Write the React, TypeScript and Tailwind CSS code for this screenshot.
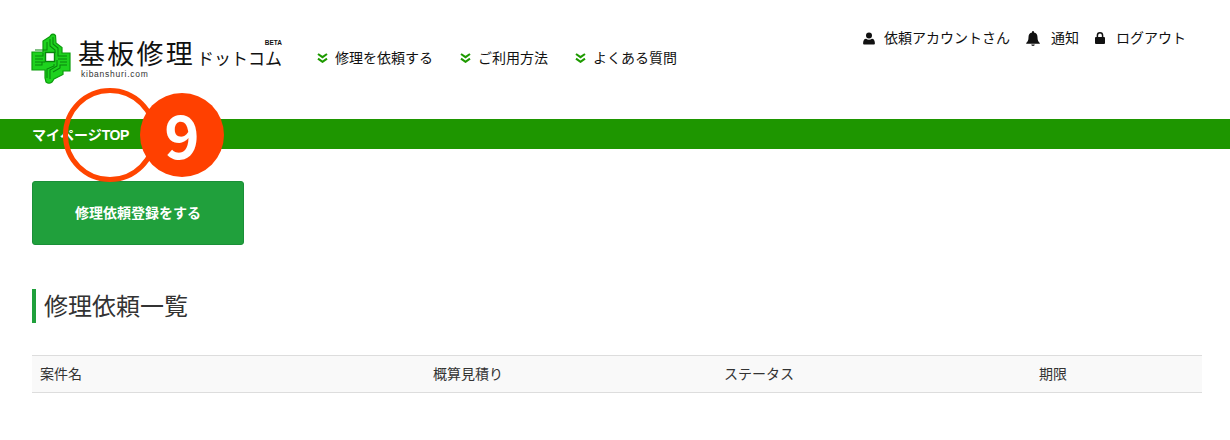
import React from "react";

const jp = { fontFamily: '"Liberation Sans", "Noto Sans CJK JP", sans-serif' };

function Chevrons() {
  return (
    <svg width="11" height="10" viewBox="0 0 11 10" className="shrink-0">
      <path d="M1 1l4.5 3.2L10 1M1 5.6l4.5 3.2L10 5.6" fill="none" stroke="#1e9a00" strokeWidth="2.1" />
    </svg>
  );
}

function Logo() {
  return (
    <svg width="40" height="52" viewBox="1 0 40 52" className="shrink-0">
      <path
        d="M20.500 3.500q2.500-2.500 5 0l.5 7.500 6 4.500 0 5.500 8 0 0 18-7 0 0 3.500-9 4.500-2 3q-3 2.500-6 0l-1-4 0-8-13 0 0-18 11 0 0-11 7-4.500z"
        fill="#1ed21e"
        stroke="#0c9c0c"
        strokeWidth="1.200"
      />
      <path
        d="M23 5v7l5 4v8h9M20 7v7l5 4v3h0M17 10v8h-12M14 18H5M5 24h8v-3M5 27h8M5 30h10M5 33h7v-3M37 27h-9M37 30h-7M37 33h-7v3l-7 4M27 28v6l-7 4v9M24 32v2l-7 3v9"
        fill="none"
        stroke="#08840c"
        strokeWidth="1.050"
      />
      <rect x="15.500" y="20.500" width="9" height="9" fill="#fff" stroke="#08840c" strokeWidth="1.400" />
    </svg>
  );
}

function UserIcon() {
  return (
    <svg width="12" height="13" viewBox="0 0 12 13" className="shrink-0" fill="#111">
      <circle cx="6" cy="3.400" r="3" />
      <path d="M1 12.500c-.6 0-.9-.4-.9-1 0-2.700.8-4.800 3-4.800.8.600 1.800 1 2.900 1s2.100-.4 2.900-1c2.200 0 3 2.100 3 4.800 0 .6-.3 1-.9 1z" />
    </svg>
  );
}

function BellIcon() {
  return (
    <svg width="14" height="15" viewBox="0 0 14 15" className="shrink-0" fill="#111">
      <path d="M7 0a1 1 0 0 1 1 1v.6c2.300.4 3.500 2.200 3.500 4.600 0 3 .8 4.500 2.300 5.800v.8H.2V12c1.500-1.300 2.300-2.800 2.300-5.800 0-2.400 1.200-4.200 3.500-4.600V1a1 1 0 0 1 1-1z" />
      <path d="M5.200 13.600h3.600a1.800 1.400 0 0 1-3.600 0z" />
    </svg>
  );
}

function LockIcon() {
  return (
    <svg width="10" height="12" viewBox="0 0 10 12" className="shrink-0">
      <rect x="0" y="5" width="10" height="7" rx="1" fill="#111" />
      <path d="M2.400 5.500V3.400a2.600 2.600 0 0 1 5.200 0v2.100" fill="none" stroke="#111" strokeWidth="1.500" />
    </svg>
  );
}

export default function App() {
  return (
    <div className="relative w-[1230px] h-[440px] overflow-hidden bg-white text-[#222]" style={jp}>
      <header className="flex justify-between h-[119px]">
        <div className="flex items-start pl-[31px] pt-[32px]">
          <Logo />
          <div className="relative ml-[7px] w-[206px] h-[50px] text-[#111]">
            <div className="flex items-end h-[37px] whitespace-nowrap leading-none">
              <span className="text-[27px] tracking-[2.250px] font-normal">基板修理</span>
              <span className="text-[17px] ml-[2px] mb-[1px] tracking-[0px]">ドットコム</span>
            </div>
            <div className="text-[8.500px] leading-none mt-[1px] ml-[3px] tracking-[0.750px] text-[#333]">kibanshuri.com</div>
            <div className="absolute right-[2px] top-[8px] text-[6.500px] font-bold leading-none">BETA</div>
          </div>
          <nav className="flex items-center gap-[27px] ml-[33px] h-[52px] text-[14px] text-[#111] whitespace-nowrap">
            <a className="flex items-center gap-[7px]"><Chevrons />修理を依頼する</a>
            <a className="flex items-center gap-[7px]"><Chevrons />ご利用方法</a>
            <a className="flex items-center gap-[7px]"><Chevrons />よくある質問</a>
          </nav>
        </div>
        <div className="flex items-start gap-[16px] pr-[44px] pt-[29px] text-[14px] leading-[18px] text-[#111] whitespace-nowrap">
          <a className="flex items-center gap-[9px]"><UserIcon />依頼アカウントさん</a>
          <a className="flex items-center gap-[11px]"><BellIcon />通知</a>
          <a className="flex items-center gap-[11px]"><LockIcon />ログアウト</a>
        </div>
      </header>

      <div className="flex items-center h-[30px] bg-[#1e9600] pl-8 pt-[2px] text-[14px] font-bold text-white">
        <span>マイページ</span><span className="tracking-[-0.500px]">TOP</span>
      </div>

      <main className="pl-8 pr-[28px] pt-8">
        <button className="flex items-center justify-center w-[212px] h-[64px] rounded-[3px] border border-[#1a8f38] bg-[#20a03c] text-[14px] font-bold text-white">
          修理依頼登録をする
        </button>
        <h2 className="mt-[44px] h-[34px] border-l-4 border-[#20a03c] pl-2 text-[24px] leading-[36px] font-normal text-[#333]">
          修理依頼一覧
        </h2>
        <div className="mt-8 flex items-center h-[38px] border-y border-[#ddd] bg-[#f9f9f9] text-[14px] text-[#333]">
          <div className="w-[401px] pl-2">案件名</div>
          <div className="w-[291px]">概算見積り</div>
          <div className="w-[315px]">ステータス</div>
          <div>期限</div>
        </div>
      </main>

      <div className="absolute left-[63px] top-[88px] w-[94px] h-[94px] rounded-full border-[5px] border-[#ff4500]" />
      <div
        className="absolute left-[140px] top-[93px] flex items-center justify-center w-[84px] h-[84px] rounded-full bg-[#ff4000] pb-[4px] text-[60px] font-bold leading-none text-white"
        style={{ fontFamily: '"Noto Sans CJK JP", sans-serif' }}
      >
        9
      </div>
    </div>
  );
}
